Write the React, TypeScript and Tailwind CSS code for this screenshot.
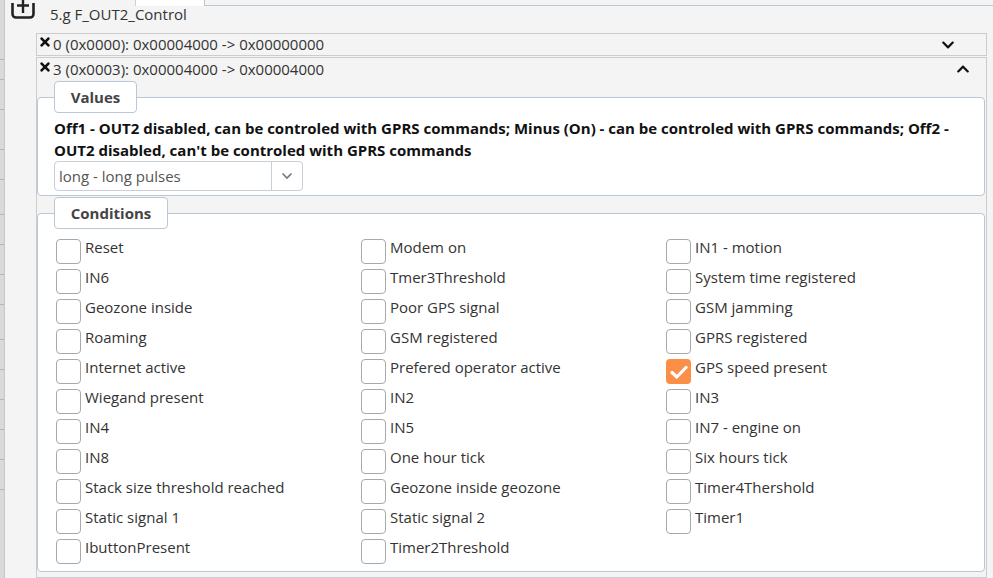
import { FaChevronDown, FaChevronUp, FaTimes } from "react-icons/fa"

const conditions: [string, boolean][] = [
  ["Reset", false],
  ["Modem on", false],
  ["IN1 - motion", false],
  ["IN6", false],
  ["Tmer3Threshold", false],
  ["System time registered", false],
  ["Geozone inside", false],
  ["Poor GPS signal", false],
  ["GSM jamming", false],
  ["Roaming", false],
  ["GSM registered", false],
  ["GPRS registered", false],
  ["Internet active", false],
  ["Prefered operator active", false],
  ["GPS speed present", true],
  ["Wiegand present", false],
  ["IN2", false],
  ["IN3", false],
  ["IN4", false],
  ["IN5", false],
  ["IN7 - engine on", false],
  ["IN8", false],
  ["One hour tick", false],
  ["Six hours tick", false],
  ["Stack size threshold reached", false],
  ["Geozone inside geozone", false],
  ["Timer4Thershold", false],
  ["Static signal 1", false],
  ["Static signal 2", false],
  ["Timer1", false],
  ["IbuttonPresent", false],
  ["Timer2Threshold", false],
]

function Legend({ label, width }: { label: string; width: string }) {
  return (
    <div
      className={`relative z-10 ml-[17px] mb-[-16px] h-[32px] ${width} rounded-[4px] border border-[#b9c7d6] bg-white flex items-center justify-center text-[15px] font-bold text-[#444]`}
    >
      {label}
    </div>
  )
}

function Checkbox({ checked }: { checked: boolean }) {
  if (checked) {
    return (
      <div className="w-[25px] h-[25px] shrink-0 rounded-[4px] bg-[#fb8f47] flex items-center justify-center">
        <svg width="18" height="14" viewBox="0 0 18 14">
          <path d="M2 7.5 L6.8 12 L16 2.5" fill="none" stroke="white" strokeWidth="3.2" strokeLinecap="round" strokeLinejoin="round" />
        </svg>
      </div>
    )
  }
  return <div className="w-[25px] h-[25px] shrink-0 rounded-[4px] border border-[#a9a9a9] bg-white" />
}

export default function App() {
  return (
    <div className="w-[993px] h-[578px] overflow-hidden flex bg-[#f4f4f4] text-[#333] font-['Open_Sans',sans-serif]">
      {/* left strip */}
      <div className="w-[5px] shrink-0 bg-[#d9d9d9] border-r border-[#c8c8c8] flex flex-col">
        {[60, 20, 30, 40, 30, 35, 30, 30, 30, 35, 30, 30, 30, 30, 30].map((h, i) => (
          <div key={i} className="border-b border-[#b5b5b5]" style={{ height: h }} />
        ))}
      </div>

      <div className="flex-1 flex flex-col">
        {/* tab strip */}
        <div className="h-[6px] flex shrink-0">
          <div className="w-[131px] border-r border-[#c9d2db]" />
          <div className="w-[69px] bg-white border-r border-[#b9c7d6]" />
          <div className="flex-1 border-b border-[#b9c7d6]" />
        </div>

        {/* header */}
        <div className="h-[27px] flex items-start pl-[6px] mt-[-6px]">
          <svg width="24" height="19" viewBox="0 0 24 19">
            <path d="M1.5 3 V14 a3.5 3.5 0 0 0 3.5 3.5 H19 a3.5 3.5 0 0 0 3.5 -3.5 V3" fill="none" stroke="#222" strokeWidth="2.6" />
            <path d="M12 0 V13 M6 5.5 H18" stroke="#222" strokeWidth="2.4" />
          </svg>
          <span className="ml-[15px] mt-[4px] text-[15px] leading-[20px] text-[#333]">5.g F_OUT2_Control</span>
        </div>

        <div className="h-[6px] shrink-0" />

        {/* row 0 */}
        <div className="ml-[31px] mr-[6px] h-[23px] border border-[#cccccc] bg-[#f4f4f4] flex items-center">
          <FaTimes className="ml-[1px] text-[14px] text-[#111] mt-[-5px]" />
          <span className="ml-[1px] mt-[-1px] text-[15px] leading-[20px]">0 (0x0000): 0x00004000 -&gt; 0x00000000</span>
          <FaChevronDown className="ml-auto mr-[31px] text-[14px] text-[#111]" />
        </div>

        {/* row 3 */}
        <div className="ml-[31px] mr-[6px] mt-[1px] flex-1 border border-[#cccccc] bg-[#f4f4f4] flex flex-col">
          <div className="h-[22px] flex items-center">
            <FaTimes className="ml-[1px] text-[14px] text-[#111] mt-[-5px]" />
            <span className="ml-[1px] text-[15px] leading-[20px]">3 (0x0003): 0x00004000 -&gt; 0x00004000</span>
            <FaChevronUp className="ml-auto mr-[16px] text-[14px] text-[#111]" />
          </div>

          {/* values */}
          <div className="mt-[1px] flex flex-col">
            <Legend label="Values" width="w-[83px]" />
            <div className="mr-[1px] rounded-[4px] border border-[#b9c7d6] bg-white pt-[19px] pb-[4px] pl-[16px] pr-[12px]">
              <p className="text-[15px] leading-[22px] font-bold text-[#111]">
                Off1 - OUT2 disabled, can be controled with GPRS commands; Minus (On) - can be controled with GPRS commands; Off2 - OUT2 disabled, can't be controled with GPRS commands
              </p>
              <div className="mt-[0px] w-[249px] h-[30px] rounded-[4px] border border-[#c7cfd8] flex">
                <div className="flex-1 flex items-center pl-[4px] text-[15px] text-[#555] border-r border-[#c7cfd8]">
                  long - long pulses
                </div>
                <div className="w-[30px] flex items-center justify-center">
                  <svg width="12" height="8" viewBox="0 0 12 8">
                    <path d="M1.5 1.5 L6 6 L10.5 1.5" fill="none" stroke="#777" strokeWidth="1.6" />
                  </svg>
                </div>
              </div>
            </div>
          </div>

          {/* conditions */}
          <div className="mt-[1px] flex flex-col">
            <Legend label="Conditions" width="w-[114px]" />
            <div className="mr-[1px] rounded-[4px] border border-[#b9c7d6] bg-white pt-[25px] pb-[7px] pl-[18px]">
              <div className="grid grid-cols-[305px_305px_1fr] gap-y-[5px]">
                {conditions.map(([label, checked]) => (
                  <div key={label} className="flex items-start h-[25px]">
                    <Checkbox checked={checked} />
                    <span className="ml-[4px] mt-[-2px] text-[15px] leading-[20px] text-[#333]">{label}</span>
                  </div>
                ))}
              </div>
            </div>
          </div>
        </div>
      </div>
    </div>
  )
}
